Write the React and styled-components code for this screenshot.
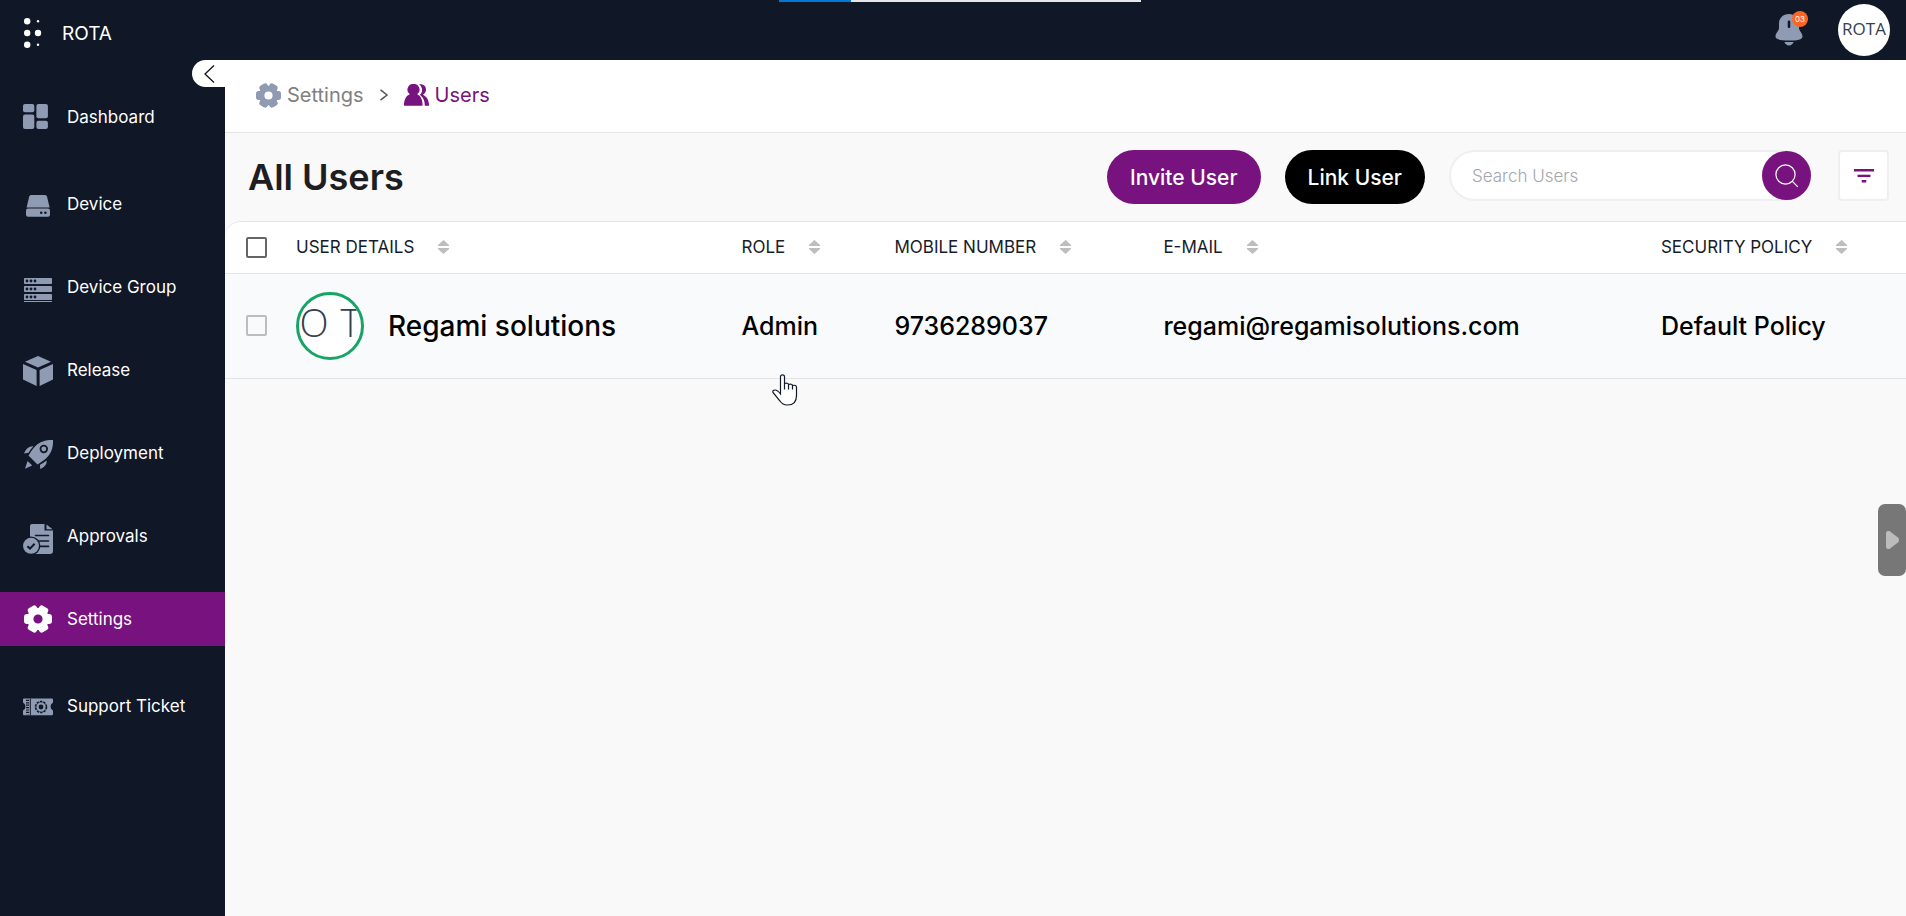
import React, { useState } from 'react';
import styled, { createGlobalStyle, css } from 'styled-components';

const colors = {
  navy: '#101726',
  purple: '#77127f',
  slate: '#8f9bb3',
  page: '#f9f9f9',
  line: '#e2e4e8',
};

const GlobalStyle = createGlobalStyle`
  *, *::before, *::after {
    box-sizing: border-box;
  }

  body {
    margin: 0;
    background: ${colors.page};
    font-family: 'Inter', 'Liberation Sans', sans-serif;
    color: #000;
  }

  button, input {
    font-family: inherit;
  }
`;

const Layout = styled.div`
  display: grid;
  grid-template-columns: 225px minmax(0, 1fr);
  min-height: 100vh;
`;

const Sidebar = styled.aside`
  position: relative;
  background: ${colors.navy};
`;

const Brand = styled.a`
  display: flex;
  align-items: center;
  gap: 20px;
  height: 66px;
  padding-left: 24px;
  color: #fff;
  font-size: 19px;
  text-decoration: none;
`;

const CollapseButton = styled.button`
  position: absolute;
  top: 60px;
  right: 0;
  display: flex;
  align-items: center;
  width: 33px;
  height: 27px;
  padding: 0 0 0 12px;
  border: none;
  border-radius: 14px 0 0 14px;
  background: #fff;
  cursor: pointer;
`;

const Nav = styled.nav`
  display: flex;
  flex-direction: column;
  gap: 29px;
  padding-top: 24px;
`;

const NavItem = styled.a`
  display: flex;
  align-items: center;
  gap: 14px;
  height: 54px;
  padding-left: 23px;
  color: #fff;
  font-size: 17px;
  text-decoration: none;

  svg {
    flex: none;
    overflow: visible;
    color: ${colors.slate};
  }

  &:first-child {
    margin-bottom: 4px;
  }

  &:last-child {
    margin-top: 4px;
  }

  ${props => props.$active && css`
    background: ${colors.purple};

    svg {
      color: #fff;
    }
  `}
`;

const Main = styled.main`
  display: flex;
  flex-direction: column;
`;

const Header = styled.header`
  display: flex;
  align-items: center;
  justify-content: flex-end;
  gap: 35px;
  height: 60px;
  padding-right: 16px;
  background: ${colors.navy};
`;

const BellButton = styled.button`
  position: relative;
  padding: 0;
  border: none;
  background: none;
  cursor: pointer;

  svg {
    display: block;
  }
`;

const BellBadge = styled.span`
  position: absolute;
  top: -3px;
  right: -5px;
  width: 16px;
  height: 16px;
  border-radius: 50%;
  background: #ff6427;
  color: #fff;
  font-size: 8px;
  line-height: 16px;
  text-align: center;
`;

const ProfileButton = styled.button`
  display: flex;
  align-items: center;
  justify-content: center;
  width: 52px;
  height: 52px;
  padding: 0 0 4px;
  border: none;
  border-radius: 50%;
  background: #fff;
  color: #33414e;
  font-family: 'Open Sans', sans-serif;
  font-size: 17px;
  cursor: pointer;
`;

const Breadcrumb = styled.nav`
  display: flex;
  align-items: center;
  gap: 15px;
  height: 73px;
  padding: 0 0 2px 31px;
  border-bottom: 1px solid ${colors.line};
  background: #fff;
`;

const Crumb = styled.a`
  display: flex;
  align-items: center;
  gap: 6px;
  color: ${props => (props.$current ? colors.purple : '#808080')};
  font-size: 20px;
  text-decoration: none;
`;

const Toolbar = styled.div`
  display: flex;
  align-items: flex-start;
  gap: 24px;
  height: 88px;
  padding: 17px 17px 0 23px;
`;

const Title = styled.h1`
  flex: 1;
  margin: 0;
  color: #1c1e21;
  font-size: 36px;
  font-weight: 600;
  line-height: 54px;
`;

const PillButton = styled.button`
  height: 54px;
  padding: 0 23px;
  border: none;
  border-radius: 27px;
  background: ${props => (props.$primary ? colors.purple : '#000')};
  color: #fff;
  font-size: 21px;
  font-weight: 500;
  cursor: pointer;
`;

const SearchBox = styled.form`
  display: flex;
  align-items: center;
  width: 362px;
  height: 51px;
  border: 2px solid #efefef;
  border-right: none;
  border-radius: 26px;
  background: #fff;
`;

const SearchInput = styled.input`
  flex: 1;
  min-width: 0;
  padding: 0 21px;
  border: none;
  outline: none;
  background: none;
  font-size: 17px;
  font-weight: 300;

  &::placeholder {
    color: #a3a7ae;
  }
`;

const SearchButton = styled.button`
  display: flex;
  align-items: center;
  justify-content: center;
  width: 49px;
  height: 49px;
  padding: 0;
  border: none;
  border-radius: 50%;
  background: ${colors.purple};
  cursor: pointer;
`;

const FilterButton = styled.button`
  display: flex;
  align-items: center;
  justify-content: center;
  width: 51px;
  height: 51px;
  margin-left: 3px;
  padding: 0;
  border: 2px solid #efefef;
  border-radius: 4px;
  background: #fff;
  cursor: pointer;
`;

const TableCard = styled.section`
  overflow: hidden;
  border-top: 1px solid ${colors.line};
  border-top-left-radius: 16px;
  background: #fff;
`;

const Table = styled.table`
  width: 100%;
  border-collapse: collapse;
  table-layout: fixed;
`;

const Column = styled.col`
  width: ${props => props.$width};
`;

const HeadCell = styled.th`
  height: 51px;
  padding: 0;
  border-bottom: 1px solid ${colors.line};
  color: #171c28;
  font-size: 17px;
  font-weight: 400;
  text-align: left;
  white-space: nowrap;
`;

const SortButton = styled.button`
  display: flex;
  align-items: center;
  gap: 24px;
  padding: 0;
  border: none;
  background: none;
  color: inherit;
  font-size: inherit;
  cursor: pointer;
`;

const Cell = styled.td`
  height: 105px;
  padding: 0;
  border-bottom: 1px solid ${colors.line};
  background: #f8fafc;
  font-size: 25px;
  font-weight: 500;
  white-space: nowrap;
`;

const Checkbox = styled.input`
  display: block;
  appearance: none;
  width: 21px;
  height: 21px;
  margin: 0 0 0 21px;
  border: 2px solid ${props => (props.$muted ? '#bdbdbd' : '#666')};
  border-radius: 2px;

  &:checked {
    background: ${colors.purple};
  }
`;

const UserDetails = styled.div`
  display: flex;
  align-items: center;
  gap: 24px;
  font-size: 28px;
`;

const UserAvatar = styled.span`
  display: flex;
  align-items: center;
  justify-content: center;
  gap: 12px;
  width: 68px;
  height: 68px;
  padding-bottom: 8px;
  overflow: hidden;
  border: 3px solid #16a566;
  border-radius: 50%;
  background: #fff;
  color: #33414e;
  font-family: 'Open Sans', sans-serif;
  font-size: 38px;
  font-weight: 300;
`;

const DrawerTab = styled.button`
  position: fixed;
  top: 55%;
  right: 0;
  display: flex;
  align-items: center;
  width: 28px;
  height: 72px;
  padding: 0 0 0 8px;
  border: none;
  border-radius: 7px;
  background: #777;
  cursor: pointer;
`;

const LoadingBar = styled.div`
  position: fixed;
  top: 0;
  left: calc(50% - 174px);
  width: 362px;
  height: 2px;
  background: #e5e5ea;
`;

const LoadingFill = styled.div`
  height: 100%;
  background: #0078d7;
`;

const Pointer = styled.svg`
  position: fixed;
  top: 374px;
  left: 772px;
  pointer-events: none;
`;

const LogoMark = () => (
  <svg width="18" height="30" viewBox="0 0 18 30" fill="#fff">
    <circle cx="3.200" cy="3.200" r="3.200" />
    <circle cx="3.200" cy="15" r="3.200" />
    <circle cx="14" cy="15" r="3.200" />
    <circle cx="3.200" cy="26.800" r="3.200" />
    <circle cx="14" cy="3.200" r="1.200" />
    <circle cx="14" cy="26.800" r="1.200" />
  </svg>
);

const NavSvg = ({ children }) => (
  <svg width="30" height="30" viewBox="0 0 30 30" fill="currentColor">
    {children}
  </svg>
);

const DashboardIcon = () => (
  <NavSvg>
    <rect x="0" y="2" width="11.3" height="8.3" rx="2" />
    <rect x="0" y="12.5" width="11.3" height="14.5" rx="2" />
    <rect x="13.4" y="2" width="11.5" height="14.3" rx="2" />
    <rect x="13.4" y="18.7" width="11.5" height="8.3" rx="2" />
  </NavSvg>
);

const DeviceIcon = () => (
  <NavSvg>
    <path d="M8 6H22Q23.6 6 24 7.5L26.6 18.4H3.6L6.2 7.5Q6.6 6 8 6Z" />
    <rect x="3" y="19.6" width="24" height="8.2" rx="2" />
    <circle cx="18.2" cy="23.7" r="1.3" fill={colors.navy} />
    <circle cx="22.4" cy="23.7" r="1.3" fill={colors.navy} />
  </NavSvg>
);

const DeviceGroupIcon = () => (
  <NavSvg>
    {[6, 14, 22].map(y => (
      <g key={y}>
        <rect x="1" y={y} width="28" height="6" rx="0.8" />
        <g fill={colors.navy}>
          <circle cx="4" cy={y + 3} r="1.4" />
          <circle cx="8" cy={y + 3} r="1.4" />
          <circle cx="12" cy={y + 3} r="1.4" />
        </g>
      </g>
    ))}
    <rect x="1" y="29" width="28" height="1" />
  </NavSvg>
);

const ReleaseIcon = () => (
  <NavSvg>
    <path d="M15 1L28 6.8L15 12.6L2 6.8Z" />
    <path d="M0 9L13.6 15V31L0 24.4Z" />
    <path d="M30 9L16.6 15V31L30 24.4Z" />
  </NavSvg>
);

const DeploymentIcon = () => (
  <NavSvg>
    <path
      fillRule="evenodd"
      d="M30 2C30.400 9 28.500 15.500 23 20.500C20 23.200 17 24.800 14.500 26.500L5.500 17.500C7.500 14.500 9 11.500 12 8.500C17 3.500 23 1.800 30 2ZM20.800 6.800A4.200 4.200 0 1 0 20.800 15.200A4.200 4.200 0 1 0 20.800 6.800Z"
    />
    <circle cx="20.800" cy="11" r="2.400" />
    <path d="M10.500 8.200C5.500 8 3 11 1 15.500L5.500 14.800Q7.600 11 10.500 8.200Z" />
    <path d="M23.600 22.500C24 26.500 21.500 29 17.200 31L17 26.800Q20.500 25 23.600 22.500Z" />
    <path d="M4.600 23L9.200 27.400L2 30.800Z" />
  </NavSvg>
);

const ApprovalsIcon = () => (
  <NavSvg>
    <path d="M9 3H21.500V9.500H30V30Q30 33 27 33H7V5Q7 3 9 3Z" />
    <path d="M23.500 3.500L29.600 8.200H23.500Z" />
    <g stroke={colors.navy} strokeWidth="1.600" strokeLinecap="round">
      <path d="M12.500 14.500H25.500M15.500 20H25.500M17.500 25.400H25.500" />
    </g>
    <circle cx="8" cy="24.800" r="9.400" fill={colors.navy} />
    <circle cx="8" cy="24.800" r="8" />
    <path d="M4.400 25.200L7 27.600L11.600 22.800" fill="none" stroke={colors.navy} strokeWidth="2" />
  </NavSvg>
);

const GearShape = () => (
  <>
    <circle cx="15" cy="15" r="7.8" fill="none" stroke="currentColor" strokeWidth="6.400" />
    {[0, 60, 120, 180, 240, 300].map(angle => (
      <rect
        key={angle}
        x="20.500"
        y="10"
        width="8.500"
        height="10"
        rx="3"
        transform={`rotate(${angle} 15 15)`}
      />
    ))}
  </>
);

const SettingsIcon = () => (
  <NavSvg>
    <GearShape />
  </NavSvg>
);

const TicketIcon = () => (
  <NavSvg>
    <path d="M1 7.500H29Q30 7.500 30 8.500V11.500A4.500 4.500 0 0 0 30 19.500V23.300Q30 24.300 29 24.300H1Q0 24.300 0 23.300V19.500A4.500 4.500 0 0 0 0 11.500V8.500Q0 7.500 1 7.500Z" />
    <path d="M7.400 7.500V24.300" stroke={colors.navy} strokeWidth="0.900" />
    <path d="M4.600 8.800V23.500" stroke={colors.navy} strokeWidth="3.200" strokeDasharray="1.200 1.200" />
    <circle cx="18" cy="16" r="5.600" fill="none" stroke={colors.navy} strokeWidth="1.400" strokeDasharray="2.400 1.118" />
    <circle cx="18" cy="16" r="4.900" fill="none" stroke={colors.navy} strokeWidth="0.500" />
    <circle cx="18" cy="16" r="2.400" fill={colors.navy} />
  </NavSvg>
);

const CrumbGearIcon = () => (
  <svg width="25" height="25" viewBox="1 1 28 28" fill="currentColor" color={colors.slate}>
    <GearShape />
  </svg>
);

const UsersIcon = () => (
  <svg width="25" height="22" viewBox="0 0 25 22" fill="currentColor">
    <path d="M9.500 0A5.700 5.700 0 0 1 13.200 10.300C16.600 11.700 18.600 15.600 18.600 21.800H0C0 15.600 2.200 11.700 5.800 10.300A5.700 5.700 0 0 1 9.500 0Z" />
    <path d="M15 0.300C20 -0.600 23 3.200 21.800 7.200C21.300 8.800 20.200 10 18.800 10.700C22.800 12.400 25 16 25 21.800H20.800C20.800 17 19.400 13.400 15.600 10.800C18.600 9.400 19.400 3.600 15 0.300Z" />
  </svg>
);

const BellIcon = () => (
  <svg width="28" height="32" viewBox="0 0 28 32" fill={colors.slate}>
    <path d="M14 0C8 0 4 4.200 4 9.500V14C4 17 0.500 19 0.500 22.400C0.500 25.400 6 26.600 14 26.600S27.500 25.400 27.500 22.400C27.500 19 24 17 24 14V9.500C24 4.200 20 0 14 0Z" />
    <path d="M9.400 28H18.600Q17.200 31.400 14 31.400T9.400 28Z" />
    <rect x="12.700" y="6.500" width="2.600" height="7.500" rx="1.200" fill={colors.navy} />
  </svg>
);

const SortIcon = () => (
  <svg width="11" height="14" viewBox="0 0 11 14" fill="#bdbdbd">
    <path d="M5.500 0L11 5V6H0V5Z" />
    <path d="M5.500 14L11 9V8H0V9Z" />
  </svg>
);

const navItems = [
  { label: 'Dashboard', Icon: DashboardIcon },
  { label: 'Device', Icon: DeviceIcon },
  { label: 'Device Group', Icon: DeviceGroupIcon },
  { label: 'Release', Icon: ReleaseIcon },
  { label: 'Deployment', Icon: DeploymentIcon },
  { label: 'Approvals', Icon: ApprovalsIcon },
  { label: 'Settings', Icon: SettingsIcon },
  { label: 'Support Ticket', Icon: TicketIcon },
];

const columns = [
  { label: 'USER DETAILS', width: '26.5%' },
  { label: 'ROLE', width: '9.1%' },
  { label: 'MOBILE NUMBER', width: '16%' },
  { label: 'E-MAIL', width: '29.6%' },
  { label: 'SECURITY POLICY', width: 'auto' },
];

const users = [
  {
    id: 1,
    name: 'Regami solutions',
    role: 'Admin',
    mobile: '9736289037',
    email: 'regami@regamisolutions.com',
    policy: 'Default Policy',
  },
];

const App = () => {
  const [search, setSearch] = useState('');
  const [selected, setSelected] = useState([]);
  const [activeItem, setActiveItem] = useState('Settings');

  const allSelected = selected.length === users.length;

  const toggleAll = () => {
    setSelected(allSelected ? [] : users.map(user => user.id));
  };

  const toggleUser = (id) => {
    setSelected(prev => (prev.includes(id) ? prev.filter(item => item !== id) : [...prev, id]));
  };

  return (
    <>
      <GlobalStyle />
      <Layout>
        <Sidebar>
          <Brand href="#">
            <LogoMark />
            ROTA
          </Brand>
          <CollapseButton aria-label="Collapse sidebar">
            <svg width="11" height="18" viewBox="0 0 11 18" fill="none" stroke="#111" strokeWidth="1.300">
              <path d="M10 0.500L1 9L10 17.500" />
            </svg>
          </CollapseButton>
          <Nav>
            {navItems.map(({ label, Icon }) => (
              <NavItem
                key={label}
                href="#"
                $active={label === activeItem}
                onClick={() => setActiveItem(label)}
              >
                <Icon />
                {label}
              </NavItem>
            ))}
          </Nav>
        </Sidebar>

        <Main>
          <Header>
            <BellButton aria-label="Notifications">
              <BellIcon />
              <BellBadge>03</BellBadge>
            </BellButton>
            <ProfileButton aria-label="Profile">ROTA</ProfileButton>
          </Header>

          <Breadcrumb aria-label="Breadcrumb">
            <Crumb href="#">
              <CrumbGearIcon />
              Settings
            </Crumb>
            <svg width="10" height="12" viewBox="0 0 10 12" fill="none" stroke="#555" strokeWidth="1.500">
              <path d="M1.500 0.800L8 6L1.500 11.200" />
            </svg>
            <Crumb href="#" $current>
              <UsersIcon />
              Users
            </Crumb>
          </Breadcrumb>

          <Toolbar>
            <Title>All Users</Title>
            <PillButton $primary>Invite User</PillButton>
            <PillButton>Link User</PillButton>
            <SearchBox onSubmit={(e) => e.preventDefault()}>
              <SearchInput
                type="text"
                aria-label="Search Users"
                placeholder="Search Users"
                value={search}
                onChange={(e) => setSearch(e.target.value)}
              />
              <SearchButton type="submit" aria-label="Search">
                <svg width="24" height="24" viewBox="0 0 24 24" fill="none" stroke="#fff" strokeWidth="1.200">
                  <circle cx="10.500" cy="10.500" r="9.600" />
                  <path d="M17.400 17.400L22.800 22.800" />
                </svg>
              </SearchButton>
            </SearchBox>
            <FilterButton aria-label="Filter">
              <svg width="20" height="14" viewBox="0 0 20 14" fill={colors.purple}>
                <rect x="0" y="0" width="20" height="2.500" />
                <rect x="3.500" y="5.700" width="13" height="2.300" />
                <rect x="7.700" y="11" width="4.600" height="2.500" />
              </svg>
            </FilterButton>
          </Toolbar>

          <TableCard>
            <Table>
              <colgroup>
                <Column $width="71px" />
                {columns.map(column => (
                  <Column key={column.label} $width={column.width} />
                ))}
              </colgroup>
              <thead>
                <tr>
                  <HeadCell>
                    <Checkbox
                      type="checkbox"
                      aria-label="Select all users"
                      checked={allSelected}
                      onChange={toggleAll}
                    />
                  </HeadCell>
                  {columns.map(column => (
                    <HeadCell key={column.label}>
                      <SortButton>
                        {column.label}
                        <SortIcon />
                      </SortButton>
                    </HeadCell>
                  ))}
                </tr>
              </thead>
              <tbody>
                {users.map(user => (
                  <tr key={user.id}>
                    <Cell>
                      <Checkbox
                        $muted
                        type="checkbox"
                        aria-label={`Select ${user.name}`}
                        checked={selected.includes(user.id)}
                        onChange={() => toggleUser(user.id)}
                      />
                    </Cell>
                    <Cell>
                      <UserDetails>
                        <UserAvatar>
                          <span>O</span>
                          <span>T</span>
                        </UserAvatar>
                        {user.name}
                      </UserDetails>
                    </Cell>
                    <Cell>{user.role}</Cell>
                    <Cell>{user.mobile}</Cell>
                    <Cell>{user.email}</Cell>
                    <Cell>{user.policy}</Cell>
                  </tr>
                ))}
              </tbody>
            </Table>
          </TableCard>
        </Main>
      </Layout>

      <DrawerTab aria-label="Open drawer">
        <svg width="13" height="18" viewBox="0 0 13 18" fill="#bcbcbc">
          <path d="M0 2Q0 0 2 0H3.500L12.200 6.800Q13 7.500 13 9T12.200 11.200L3.500 18H2Q0 18 0 16Z" />
        </svg>
      </DrawerTab>

      <LoadingBar>
        <LoadingFill style={{ width: '20%' }} />
      </LoadingBar>

      <Pointer width="26" height="32" viewBox="0 0 26 32" fill="#fff" stroke="#111827" strokeWidth="1.200">
        <path d="M8.500 17V2.800Q8.500 0.800 10.500 0.800T12.500 2.800V9.500Q16 8.500 16.500 10.500Q20 9.500 20.500 11.500Q24.500 10.500 24.500 13.500V21.500Q24.500 31 15.500 31Q10.500 31 8 27L1 18.500Q0.300 16 3 16Q5.500 16 8.500 20V15" />
        <path d="M12.500 9.500V15.500M16.500 10.500V15.500M20.500 11.500V15.500" />
      </Pointer>
    </>
  );
};

export default App;
